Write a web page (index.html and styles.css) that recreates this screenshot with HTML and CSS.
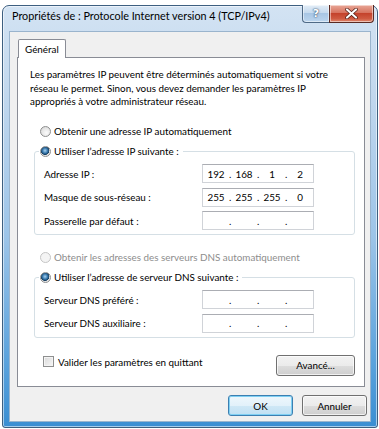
FILE: index.html
```html
<!DOCTYPE html>
<html lang="fr">
<head>
  <meta charset="UTF-8">
  <meta name="viewport" content="width=device-width, initial-scale=1.0">
  <title>Propriétés de : Protocole Internet version 4 (TCP/IPv4)</title>
  <link rel="stylesheet" href="styles.css">
</head>
<body>
  <div class="window">
    <!-- Barre de titre -->
    <div class="titlebar">
      <span class="title">Propriétés de : Protocole Internet version 4 (TCP/IPv4)</span>
      <div class="caption-buttons">
        <span class="cap help">?</span>
        <span class="cap close">
          <svg width="13" height="11" viewBox="0 0 13 11">
            <path d="M2 1.5 L11 9.5 M11 1.5 L2 9.5" stroke="#4a1a12" stroke-width="3.6" stroke-linecap="round"/>
            <path d="M2 1.5 L11 9.5 M11 1.5 L2 9.5" stroke="#fff" stroke-width="2.2" stroke-linecap="round"/>
          </svg>
        </span>
      </div>
    </div>

    <div class="client">
      <!-- Onglets -->
      <div class="tabs">
        <span class="tab">Général</span>
      </div>

      <div class="tabpage">
        <p class="intro">Les paramètres IP peuvent être déterminés automatiquement si votre<br>réseau le permet. Sinon, vous devez demander les paramètres IP<br>appropriés à votre administrateur réseau.</p>

        <label class="option first"><span class="radio"></span>Obtenir une adresse IP automatiquement</label>

        <fieldset class="group">
          <legend><label class="option"><span class="radio checked"></span>Utiliser l’adresse IP suivante :</label></legend>
          <div class="field">
            <span class="field-label">Adresse IP :</span>
            <span class="ip"><span class="oct">192</span><span class="dot">.</span><span class="oct">168</span><span class="dot">.</span><span class="oct">1</span><span class="dot">.</span><span class="oct">2</span></span>
          </div>
          <div class="field">
            <span class="field-label">Masque de sous-réseau :</span>
            <span class="ip"><span class="oct">255</span><span class="dot">.</span><span class="oct">255</span><span class="dot">.</span><span class="oct">255</span><span class="dot">.</span><span class="oct">0</span></span>
          </div>
          <div class="field">
            <span class="field-label">Passerelle par défaut :</span>
            <span class="ip"><span class="oct"></span><span class="dot">.</span><span class="oct"></span><span class="dot">.</span><span class="oct"></span><span class="dot">.</span><span class="oct"></span></span>
          </div>
        </fieldset>

        <label class="option disabled dns-auto"><span class="radio"></span>Obtenir les adresses des serveurs DNS automatiquement</label>

        <fieldset class="group">
          <legend><label class="option"><span class="radio checked"></span>Utiliser l’adresse de serveur DNS suivante :</label></legend>
          <div class="field">
            <span class="field-label">Serveur DNS préféré :</span>
            <span class="ip"><span class="oct"></span><span class="dot">.</span><span class="oct"></span><span class="dot">.</span><span class="oct"></span><span class="dot">.</span><span class="oct"></span></span>
          </div>
          <div class="field">
            <span class="field-label">Serveur DNS auxiliaire :</span>
            <span class="ip"><span class="oct"></span><span class="dot">.</span><span class="oct"></span><span class="dot">.</span><span class="oct"></span><span class="dot">.</span><span class="oct"></span></span>
          </div>
        </fieldset>

        <div class="bottom-row">
          <label class="check-option"><span class="checkbox"></span>Valider les paramètres en quittant</label>
          <button class="btn advanced">Avancé...</button>
        </div>
      </div>

      <!-- Boutons du dialogue -->
      <div class="dialog-buttons">
        <button class="btn default">OK</button>
        <button class="btn">Annuler</button>
      </div>
    </div>
  </div>
</body>
</html>
```

FILE: styles.css
```css
/* Page */
body {
  margin: 0;
  background: #fff;
  font-family: Lato, "Open Sans", sans-serif;
  font-size: 9.85px;
  color: #000;
}

/* Fenêtre */
.window {
  box-sizing: border-box;
  width: 376px;
  height: 423px;
  margin: 5px 0 0 2px;
  padding-bottom: 5px;
  border: 1px solid #3d5f80;
  border-radius: 7px 7px 3px 3px;
  background: linear-gradient(#d3e3f3 0%, #c2d8ee 20%, #9cc4e8 55%, #5aa2dc 85%, #3a8ed2 100%);
  box-shadow: inset 0 0 0 1px rgba(255, 255, 255, 0.55);
}

.titlebar {
  display: flex;
  align-items: flex-start;
  height: 25px;
  padding: 0 3px 0 9px;
}

.title {
  margin-top: 2px;
  font-size: 10.8px;
  line-height: 15px;
  white-space: nowrap;
}

.caption-buttons {
  display: flex;
  margin-left: auto;
  margin-top: -1px;
}

.cap {
  display: flex;
  align-items: center;
  justify-content: center;
  height: 17px;
  border: 1px solid #4f6a86;
  border-top: none;
  box-shadow: inset 0 0 0 1px rgba(255, 255, 255, 0.5);
}

.help {
  width: 26px;
  border-radius: 0 0 0 4px;
  border-right: none;
  background: linear-gradient(#e3edf7, #c6daee 45%, #a8c6e4 50%, #bcd5ee);
  color: #fff;
  font-family: "DejaVu Sans", sans-serif;
  font-weight: bold;
  font-size: 11px;
  text-shadow: 0 0 2px #2c4a6a, 0 0 1px #2c4a6a;
}

.close {
  width: 43px;
  border-color: #5a2a22;
  border-radius: 0 0 4px 0;
  background: linear-gradient(#e9a898, #d77460 45%, #c4432c 50%, #cf5a41 80%, #e08a70);
}

/* Zone client */
.client {
  box-sizing: border-box;
  height: 391px;
  margin: 0 6px;
  background: #f0f0f0;
  border: 1px solid #9ab4cd;
}

.tabs {
  display: flex;
  padding: 7px 0 0 8px;
}

.tab {
  position: relative;
  z-index: 1;
  box-sizing: border-box;
  width: 48px;
  height: 19px;
  margin-bottom: -1px;
  padding: 2px 0 0 6px;
  background: #fff;
  border: 1px solid #898c95;
  border-bottom: none;
  border-radius: 2px 2px 0 0;
  line-height: 14px;
}

.tabpage {
  box-sizing: border-box;
  height: 330px;
  margin: 0 5px 0 7px;
  padding: 10px 9px 0 12px;
  background: #fff;
  border: 1px solid #898c95;
}

.intro {
  margin: 0;
  line-height: 13.5px;
}

/* Boutons radio */
.option {
  display: flex;
  align-items: center;
  height: 14px;
  line-height: 14px;
  white-space: nowrap;
}

.option.first {
  margin-top: 15.5px;
  padding-left: 10px;
}

.option.dns-auto {
  margin-top: 15px;
  padding-left: 10px;
}

.option.disabled {
  color: #8d8d8d;
}

.radio {
  box-sizing: border-box;
  width: 11px;
  height: 11px;
  margin-right: 3px;
  border: 1px solid #8e8f8f;
  border-radius: 50%;
  background: radial-gradient(circle at 60% 65%, #fbfbfb 0%, #e6e6e6 55%, #cfcfcf 100%);
}

.radio.checked {
  background: radial-gradient(circle at 45% 40%, #a6d3f3 0%, #2f6fa4 38%, #173d5e 55%, #e2e2e2 62%, #f7f7f7 100%);
}

.disabled .radio {
  border-color: #c5c5c5;
  background: #f4f4f4;
}

/* Groupes */
.group {
  margin: 6px 0 0 4px;
  padding: 0 0 4px 9px;
  border: 1px solid #d5dfe5;
  border-radius: 3px;
}

.group legend {
  margin-left: -5px;
  padding: 0 4px 0 1px;
}

.field {
  display: flex;
  align-items: center;
  margin-top: 4.5px;
}

.group legend + .field {
  margin-top: 6px;
}

.field-label {
  width: 158px;
}

.ip {
  box-sizing: border-box;
  display: flex;
  width: 112px;
  height: 19px;
  align-items: center;
  background: #fff;
  border: 1px solid #d0d3d8;
  border-top-color: #abadb3;
}

.oct {
  width: 26px;
  text-align: center;
}

.dot {
  width: 2px;
  text-align: center;
}

/* Case à cocher et Avancé */
.bottom-row {
  display: flex;
  align-items: flex-start;
  margin: 17px 0 0 0;
}

.check-option {
  display: flex;
  align-items: center;
  margin-top: 0;
  padding-left: 13px;
  line-height: 14px;
}

.checkbox {
  box-sizing: border-box;
  width: 11px;
  height: 11px;
  margin-right: 4px;
  border: 1px solid #8e8f8f;
  background: linear-gradient(135deg, #d9d9d9, #f7f7f7);
  box-shadow: inset 0 0 0 1px #f4f4f4;
}

/* Boutons */
.btn {
  box-sizing: border-box;
  height: 21px;
  padding: 0;
  font-family: inherit;
  font-size: 9.85px;
  color: #000;
  border: 1px solid #707070;
  border-radius: 3px;
  background: linear-gradient(#f2f2f2 0%, #ebebeb 50%, #dddddd 50%, #cfcfcf 100%);
  box-shadow: inset 0 0 0 1px rgba(255, 255, 255, 0.7);
}

.advanced {
  width: 79px;
  margin-left: auto;
}

.dialog-buttons {
  display: flex;
  justify-content: flex-end;
  gap: 9px;
  margin-top: 8px;
  padding-right: 3px;
}

.dialog-buttons .btn {
  width: 65px;
}

.btn.default {
  border-color: #3c7fb1;
  background: linear-gradient(#eef7fc 0%, #e2f1fa 50%, #cfe8f6 50%, #c0e0f3 100%);
  box-shadow: inset 0 0 0 1px #7fd0f3;
}
```
